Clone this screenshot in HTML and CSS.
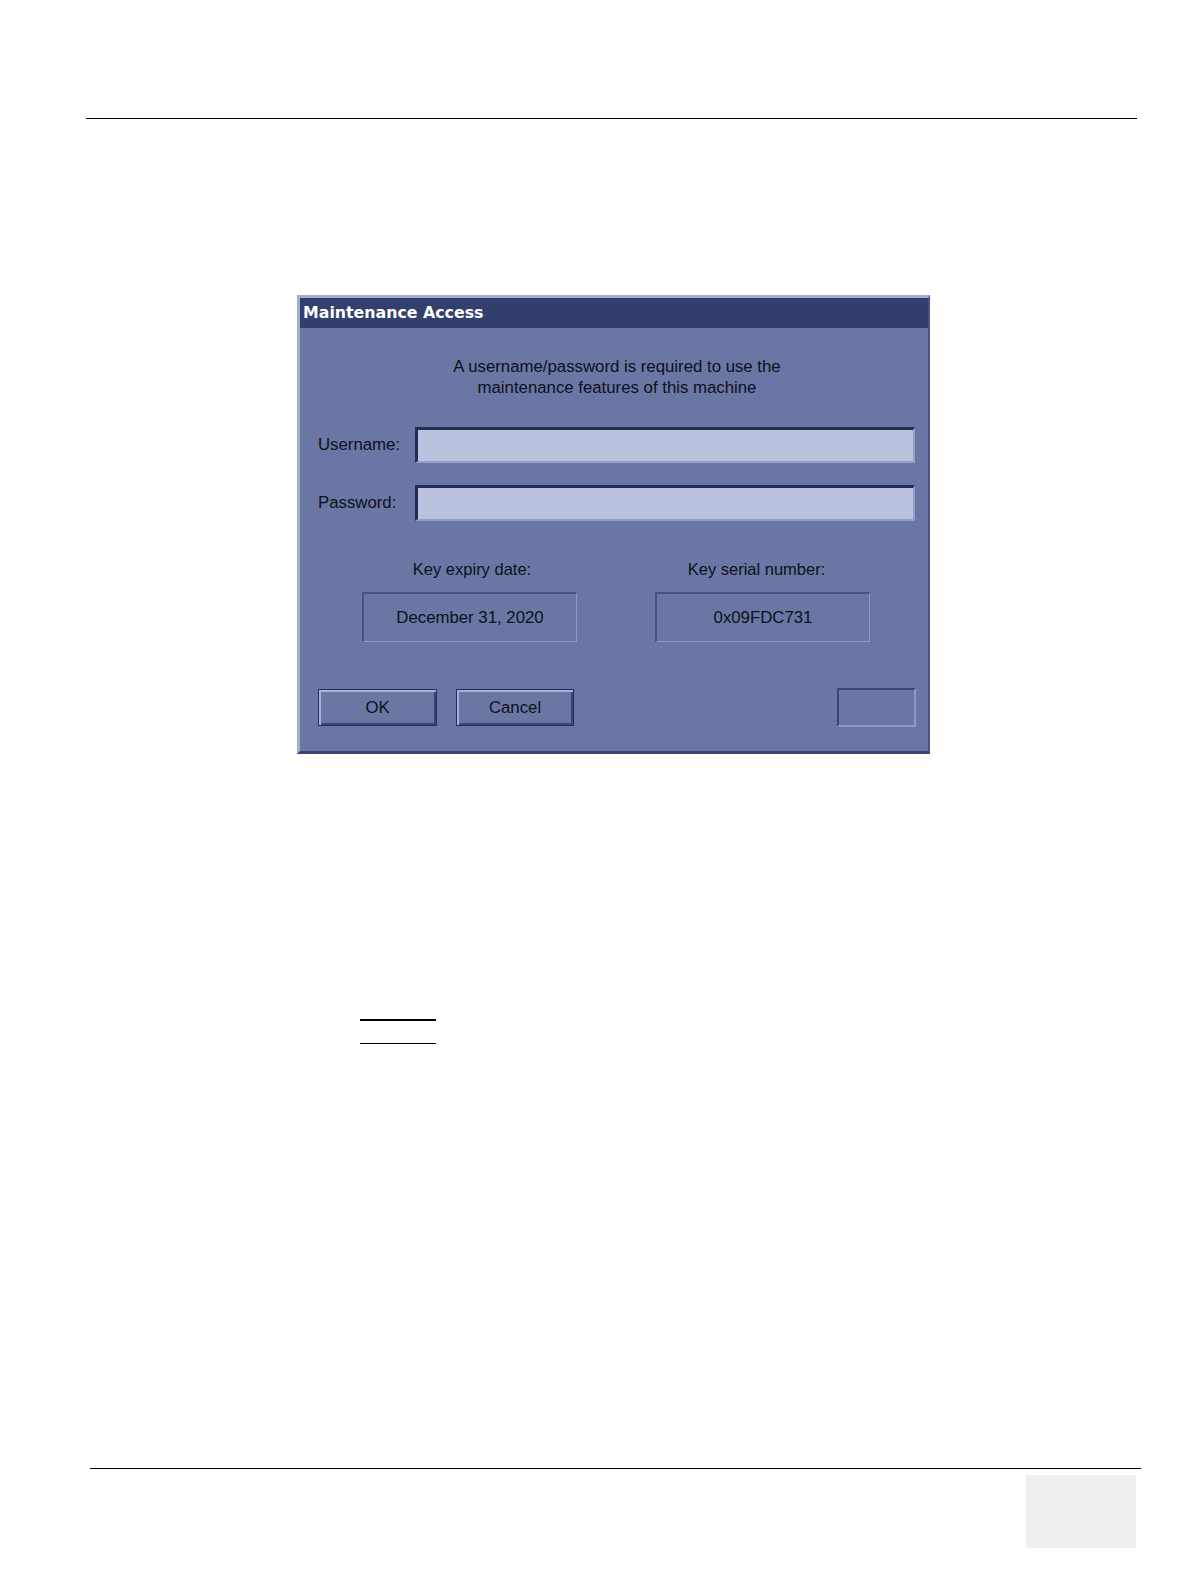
FILE: index.html
```html
<!DOCTYPE html>
<html>
<head>
<meta charset="utf-8">
<title>Maintenance Access</title>
<link rel="stylesheet" href="styles.css">
</head>
<body>
<div class="page">
  <div class="rule-top"></div>

  <div class="dialog">
    <div class="titlebar">Maintenance Access</div>
    <div class="msg">A username/password is required to use the<br>maintenance features of this machine</div>

    <div class="field first">
      <span class="field-label">Username:</span>
      <div class="input"></div>
    </div>
    <div class="field second">
      <span class="field-label">Password:</span>
      <div class="input"></div>
    </div>

    <div class="keys">
      <div class="key">
        <div class="key-label expiry">Key expiry date:</div>
        <div class="key-box">December 31, 2020</div>
      </div>
      <div class="key">
        <div class="key-label serial">Key serial number:</div>
        <div class="key-box">0x09FDC731</div>
      </div>
    </div>

    <div class="buttons">
      <div class="btn ok">OK</div>
      <div class="btn cancel">Cancel</div>
      <div class="spacer"></div>
      <div class="blank"></div>
    </div>
  </div>

  <div class="underlines">
    <div class="u1"></div>
    <div class="u2"></div>
  </div>

  <div class="rule-bottom"></div>
  <div class="page-tab"></div>
</div>
</body>
</html>
```

FILE: styles.css
```css
body {
  margin: 0;
  background: #ffffff;
  font-family: "Liberation Sans", Arial, sans-serif;
}

.page {
  width: 1190px;
  height: 1584px;
  overflow: hidden;
}

.rule-top {
  margin: 118px 0 0 86px;
  width: 1051px;
  height: 1px;
  background: #000;
}

.dialog {
  margin: 176px 0 0 297px;
  width: 633px;
  box-sizing: border-box;
  background: #6a76a3;
  border-top: 3px solid #a4acd0;
  border-left: 3px solid #a4acd0;
  border-right: 2px solid #4a5380;
  border-bottom: 3px solid #3d4572;
  color: #0d1020;
}

.titlebar {
  height: 30px;
  line-height: 30px;
  background: #333f6d;
  color: #ffffff;
  font-family: "DejaVu Sans", Verdana, sans-serif;
  font-weight: bold;
  font-size: 15.8px;
  padding-left: 3px;
}

.msg {
  margin-top: 27.5px;
  padding-left: 6px;
  text-align: center;
  font-size: 16.8px;
  line-height: 21px;
}

.field {
  display: flex;
  align-items: center;
  margin-left: 18px;
}

.field.first {
  margin-top: 29.5px;
}

.field.second {
  margin-top: 22px;
}

.field-label {
  width: 97px;
  font-size: 16.8px;
}

.input {
  width: 500px;
  height: 36px;
  box-sizing: border-box;
  background: #b9c1dc;
  border-top: 3px solid #232b57;
  border-left: 3px solid #232b57;
  border-right: 2px solid #959ec6;
  border-bottom: 2px solid #959ec6;
}

.keys {
  display: flex;
  gap: 78px;
  margin: 37.5px 0 0 62px;
}

.key {
  width: 215px;
  display: flex;
  flex-direction: column;
  align-items: center;
}

.key-label {
  font-size: 16.5px;
  line-height: 21px;
  margin-bottom: 12.5px;
}

.key-label.expiry {
  margin-left: 5px;
}

.key-label.serial {
  margin-right: 12px;
}

.key-box {
  width: 100%;
  height: 50px;
  box-sizing: border-box;
  border-top: 2px solid #465082;
  border-left: 2px solid #465082;
  border-right: 1px solid #8e98c0;
  border-bottom: 1px solid #8e98c0;
  display: flex;
  align-items: center;
  justify-content: center;
  font-size: 16.8px;
}

.buttons {
  display: flex;
  align-items: center;
  height: 39px;
  margin: 46px 12px 0 18px;
  padding-bottom: 24px;
}

.btn {
  height: 37px;
  box-sizing: border-box;
  background: #6b77a3;
  border: 1px solid #283058;
  box-shadow: inset 2px 2px 0 #a7b0d6, inset -2px -2px 0 #3b4475;
  display: flex;
  align-items: center;
  justify-content: center;
  font-size: 16.8px;
}

.btn.ok {
  width: 119px;
  margin-right: 19px;
}

.btn.cancel {
  width: 118px;
}

.spacer {
  flex: 1;
}

.blank {
  width: 79px;
  height: 39px;
  box-sizing: border-box;
  border-top: 2px solid #3c4577;
  border-left: 2px solid #3c4577;
  border-right: 2px solid #8f9ac4;
  border-bottom: 2px solid #8f9ac4;
}

.underlines {
  margin: 265px 0 0 360px;
  width: 76px;
}

.u1 {
  height: 2px;
  background: #000;
}

.u2 {
  margin-top: 22px;
  height: 1px;
  background: #000;
}

.rule-bottom {
  margin: 424px 0 0 90px;
  width: 1051px;
  height: 1px;
  background: #000;
}

.page-tab {
  margin: 6px 0 0 1026px;
  width: 110px;
  height: 73px;
  background: #efefef;
}
```
